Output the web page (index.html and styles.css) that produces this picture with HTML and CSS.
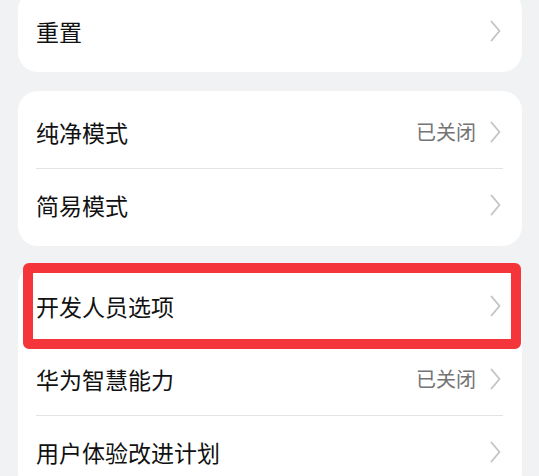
FILE: index.html
```html
<!DOCTYPE html>
<html lang="zh-CN">
<head>
<meta charset="utf-8">
<title>设置</title>
<link rel="stylesheet" href="styles.css">
</head>
<body>
<div class="page">
  <section class="card">
    <div class="row">
      <span class="label">重置</span>
      <svg class="chev" viewBox="0 0 14 22" width="14" height="22"><path d="M2.5 1.5 L10.5 11 L2.5 20.5"/></svg>
    </div>
  </section>

  <section class="card">
    <div class="row">
      <span class="label">纯净模式</span>
      <span class="value">已关闭</span>
      <svg class="chev" viewBox="0 0 14 22" width="14" height="22"><path d="M2.5 1.5 L10.5 11 L2.5 20.5"/></svg>
    </div>
    <div class="divider"></div>
    <div class="row">
      <span class="label">简易模式</span>
      <svg class="chev" viewBox="0 0 14 22" width="14" height="22"><path d="M2.5 1.5 L10.5 11 L2.5 20.5"/></svg>
    </div>
  </section>

  <section class="card">
    <div class="row">
      <span class="label">开发人员选项</span>
      <svg class="chev" viewBox="0 0 14 22" width="14" height="22"><path d="M2.5 1.5 L10.5 11 L2.5 20.5"/></svg>
    </div>
    <div class="divider"></div>
    <div class="row">
      <span class="label">华为智慧能力</span>
      <span class="value">已关闭</span>
      <svg class="chev" viewBox="0 0 14 22" width="14" height="22"><path d="M2.5 1.5 L10.5 11 L2.5 20.5"/></svg>
    </div>
    <div class="divider"></div>
    <div class="row">
      <span class="label">用户体验改进计划</span>
      <svg class="chev" viewBox="0 0 14 22" width="14" height="22"><path d="M2.5 1.5 L10.5 11 L2.5 20.5"/></svg>
    </div>
    <div class="highlight"></div>
  </section>
</div>
</body>
</html>
```

FILE: styles.css
```css
html, body {
  margin: 0;
  padding: 0;
  background: #f1f2f4;
  height: 100%;
  overflow: hidden;
}

body {
  font-family: "Noto Sans CJK SC", "Noto Sans", sans-serif;
  color: #111111;
}

.page {
  display: flex;
  flex-direction: column;
  gap: 19px;
  padding: 0 17px 0 18px;
  margin-top: -10px;
}

.card {
  position: relative;
  background: #ffffff;
  border-radius: 20px;
  padding: 5px 0;
}

.row {
  display: flex;
  align-items: center;
  height: 72px;
  padding: 0 19px 0 18px;
}

.label {
  flex: 1;
  font-size: 23px;
  font-weight: 400;
  line-height: 1;
  color: #111111;
}

.value {
  font-size: 20px;
  line-height: 1;
  color: #747474;
  margin-right: 13px;
}

.chev {
  display: block;
  flex: none;
}

.chev path {
  fill: none;
  stroke: #c4c4c4;
  stroke-width: 1.9;
  stroke-linecap: round;
  stroke-linejoin: round;
}

.divider {
  height: 1px;
  background: #e3e3e3;
  margin: 0 19px 0 18px;
}

.highlight {
  position: absolute;
  left: 5px;
  top: -2px;
  width: 498px;
  height: 86px;
  box-sizing: border-box;
  border: 10px solid #f4363a;
  border-radius: 6px;
}
```
